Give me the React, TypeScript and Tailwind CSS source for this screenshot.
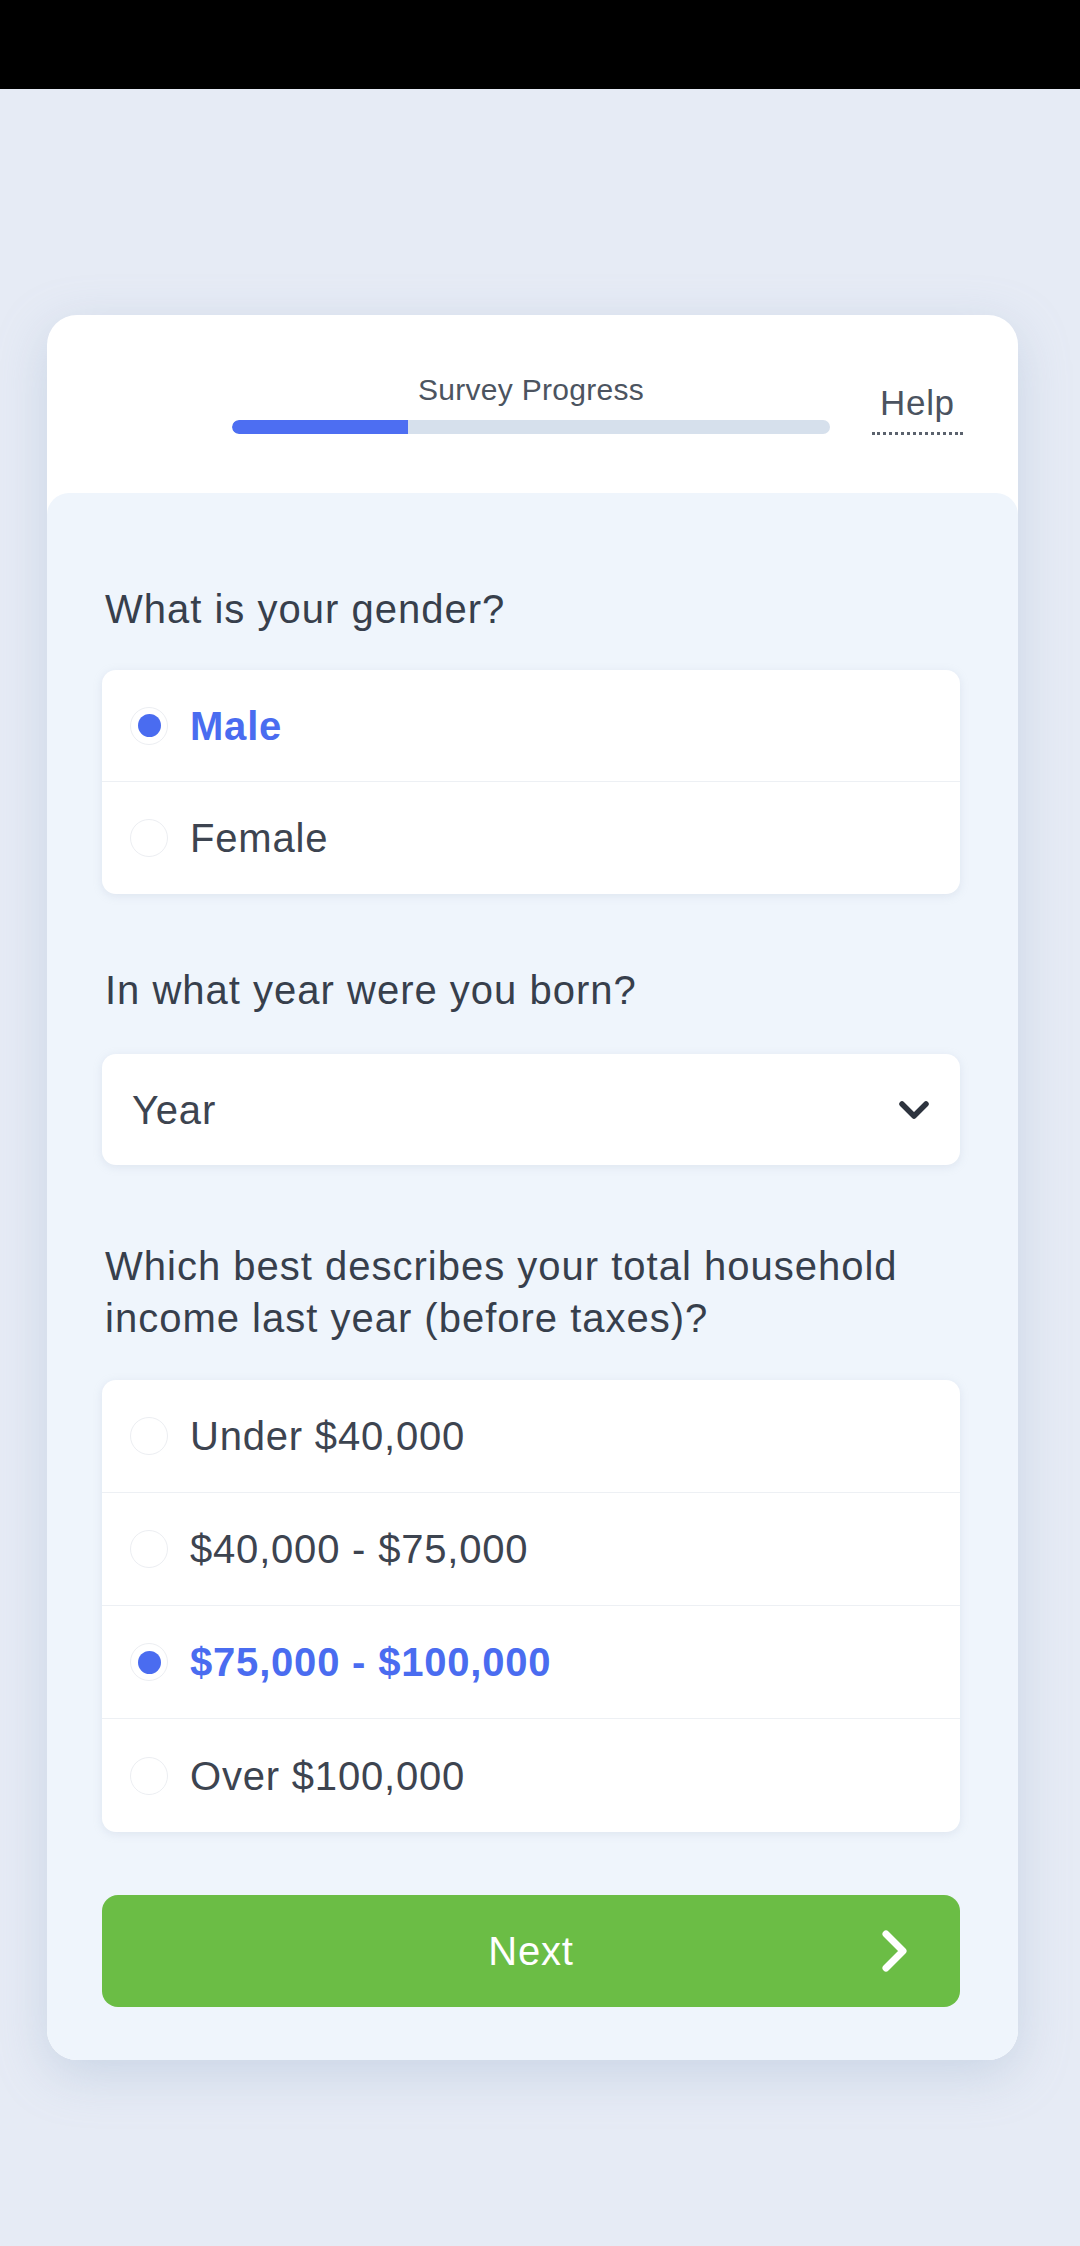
import React from 'react';

const genderOptions = [
  { id: 'male', label: 'Male' },
  { id: 'female', label: 'Female' },
];

const incomeOptions = [
  { id: 'under-40', label: 'Under $40,000' },
  { id: '40-75', label: '$40,000 - $75,000' },
  { id: '75-100', label: '$75,000 - $100,000' },
  { id: 'over-100', label: 'Over $100,000' },
];

interface RadioGroupProps {
  options: { id: string; label: string }[];
  selected: string;
  tall?: boolean;
}

const RadioGroup: React.FC<RadioGroupProps> = ({ options, selected, tall }) => (
  <div className="rounded-[14px] bg-white shadow-[0_2px_8px_rgba(170,185,205,0.25)] divide-y divide-[#edf0f4]">
    {options.map((opt) => {
      const active = opt.id === selected;
      return (
        <div key={opt.id} className={`${tall ? 'h-[113px]' : 'h-[112px]'} flex items-center pl-[28px]`}>
          <span className="w-[38px] h-[38px] rounded-full border border-[#eceef2] bg-white flex items-center justify-center flex-shrink-0">
            {active && <span className="w-[23px] h-[23px] rounded-full bg-[#4a6cf0]" />}
          </span>
          <span
            className={`ml-[22px] text-[40px] leading-[52px] tracking-[0.02em] ${
              active ? 'font-bold text-[#4a6cf0]' : 'text-[#3d4450]'
            }`}
          >
            {opt.label}
          </span>
        </div>
      );
    })}
  </div>
);

const Question: React.FC<{ children: React.ReactNode; className?: string }> = ({ children, className }) => (
  <h2 className={`pl-[3px] text-[40px] leading-[52px] tracking-[0.025em] text-[#373f4c] font-normal ${className ?? ''}`}>
    {children}
  </h2>
);

export default function App() {
  return (
    <div className="min-h-[2246px] bg-[#e6ebf5] font-['Liberation_Sans',Arial,sans-serif]">
      {/* Status bar */}
      <div className="h-[89px] bg-black" />

      <div className="pl-[47px] pr-[62px] pt-[226px] pb-[186px]">
        <div className="rounded-[30px] bg-white shadow-[0_14px_50px_rgba(150,172,200,0.35)] overflow-hidden">
          {/* Header */}
          <div className="h-[178px] pt-[58px] pl-[185px] flex items-start">
            <div className="w-[598px] flex flex-col items-center">
              <span className="text-[30px] leading-[34px] tracking-[0.01em] text-[#4c5460]">Survey Progress</span>
              <div className="mt-[13px] w-full h-[14px] rounded-full bg-[#d6e0ec] overflow-hidden">
                <div className="h-full w-[176px] rounded-l-full bg-[#4d6ef2]" />
              </div>
            </div>
            <span className="ml-[42px] mt-[11px] px-[8px] pb-[10px] border-b-[3px] border-dotted border-[#5b626d] text-[35px] leading-[38px] tracking-[0.02em] text-[#4b5360]">
              Help
            </span>
          </div>

          {/* Questions */}
          <div className="rounded-t-[22px] bg-[#eff5fc] pl-[55px] pr-[58px] pt-[90px] pb-[53px]">
            <Question>What is your gender?</Question>
            <div className="mt-[35px]">
              <RadioGroup options={genderOptions} selected="male" />
            </div>

            <Question className="mt-[70px]">In what year were you born?</Question>
            <div className="mt-[38px] h-[111px] rounded-[14px] bg-white shadow-[0_2px_8px_rgba(170,185,205,0.25)] flex items-center justify-between pl-[30px] pr-[30px]">
              <span className="text-[40px] leading-[52px] tracking-[0.02em] text-[#3d4450]">Year</span>
              <svg width="32" height="20" viewBox="0 0 32 20" fill="none">
                <path d="M4 4l12 12L28 4" stroke="#2d333e" strokeWidth="5.5" strokeLinecap="round" strokeLinejoin="round" />
              </svg>
            </div>

            <Question className="mt-[75px]">
              Which best describes your total household income last year (before taxes)?
            </Question>
            <div className="mt-[36px]">
              <RadioGroup options={incomeOptions} selected="75-100" tall />
            </div>

            <button className="mt-[63px] w-full h-[112px] rounded-[16px] bg-[#6bbd45] grid grid-cols-[1fr_auto_1fr] items-center">
              <span />
              <span className="text-[40px] leading-[52px] tracking-[0.02em] text-white">Next</span>
              <span className="flex justify-end pr-[50px]">
                <svg width="30" height="46" viewBox="0 0 30 46" fill="none">
                  <path d="M6 6l17 17L6 40" stroke="white" strokeWidth="7" strokeLinecap="round" strokeLinejoin="round" />
                </svg>
              </span>
            </button>
          </div>
        </div>
      </div>
    </div>
  );
}
